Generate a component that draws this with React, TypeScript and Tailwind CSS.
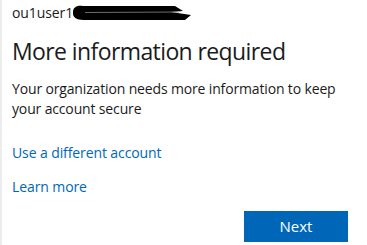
export default function App() {
  return (
    <div className="w-[367px] h-[245px] overflow-hidden bg-white border-l-2 border-[#ececec] font-['Open_Sans',sans-serif] text-[#1b1b1b]">
      <div className="pl-[10px]">
        <div className="flex items-center h-[24px] text-[14px] tracking-[-0.1px] text-[#1b1b1b]">
          <span>ou1user1</span>
          <svg width="124" height="20" viewBox="0 0 124 20" className="-ml-[4px]">
            <path d="M4 10 C4 4 10 3 14 4 L106 4 L114 9 L102 10 L122 13 L116 18 L14 18 C8 18 4 15 4 12 Z" fill="#000" />
            <path d="M16 10.5 L110 10" stroke="#888" strokeWidth="0.8" />
          </svg>
        </div>
        <h1 className="mt-[11px] text-[23px] leading-[32px] tracking-[-0.6px] font-normal">More information required</h1>
        <p className="mt-[12px] text-[14px] leading-[20px] tracking-[-0.15px] text-[#1b1b1b] w-[330px]">
          Your organization needs more information to keep your account secure
        </p>
        <div className="mt-[24px] text-[14px] leading-[20px] tracking-[-0.1px] text-[#0067b8]">Use a different account</div>
        <div className="mt-[14px] text-[14px] leading-[20px] tracking-[-0.1px] text-[#0067b8]">Learn more</div>
        <div className="flex justify-end pr-[19px] mt-[14px]">
          <button className="w-[104px] h-[31px] bg-[#0067b8] text-white text-[15px]">Next</button>
        </div>
      </div>
    </div>
  );
}
